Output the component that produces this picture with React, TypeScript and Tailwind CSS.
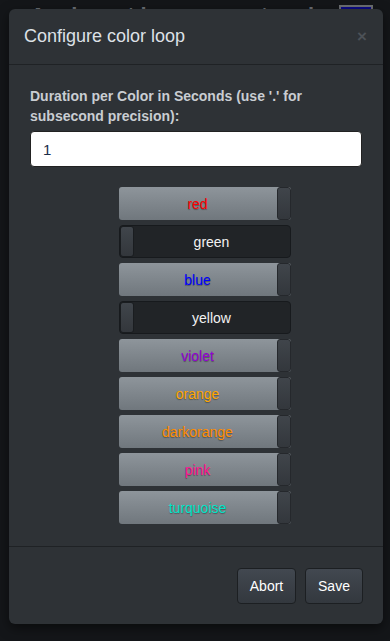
import React from "react";

type Item = { name: string; color: string; on: boolean };

const items: Item[] = [
  { name: "red", color: "#ff0000", on: true },
  { name: "green", color: "#008000", on: false },
  { name: "blue", color: "#0000ff", on: true },
  { name: "yellow", color: "#ffff00", on: false },
  { name: "violet", color: "#9400d3", on: true },
  { name: "orange", color: "#ffa500", on: true },
  { name: "darkorange", color: "#ff8c00", on: true },
  { name: "pink", color: "#ff1493", on: true },
  { name: "turquoise", color: "#00e5c8", on: true },
];

const ColorSwitch = ({ item }: { item: Item }) => {
  if (item.on) {
    return (
      <div className="flex h-[33px] w-[172px] rounded-[3px] bg-gradient-to-b from-[#8e959b] to-[#70777d]">
        <div
          className="flex flex-1 items-center justify-center pt-[2px] text-[14px] [text-shadow:0_1px_1px_rgba(0,0,0,0.35)]"
          style={{ color: item.color }}
        >
          {item.name}
        </div>
        <div className="w-[14px] rounded-[3px] border border-[#25282c] bg-gradient-to-b from-[#40454b] to-[#33373c]" />
      </div>
    );
  }
  return (
    <div className="flex h-[33px] w-[172px] rounded-[4px] border border-[#171a1d] bg-[#212427]">
      <div className="w-[14px] rounded-[3px] border border-[#1a1d20] bg-gradient-to-b from-[#40454b] to-[#33373c]" />
      <div className="flex flex-1 items-center justify-center pt-[2px] text-[14px] text-[#f2f2f2]">
        {item.name}
      </div>
    </div>
  );
};

export default function App() {
  return (
    <div className="relative h-[641px] w-[390px] overflow-hidden bg-[#141619] font-['Liberation_Sans',Arial,sans-serif]">
      {/* page behind the overlay */}
      <div className="flex items-start justify-between px-[30px] pt-[5px]">
        <div className="text-[22px] font-bold leading-none tracking-[6px] text-[#6b6f75]">
          Animation control
        </div>
        <div className="mr-[-13px] h-[20px] w-[34px] border-2 border-[#6c6f73] bg-[#0b0a86]" />
      </div>

      {/* modal */}
      <div className="absolute left-[9px] top-[9px] flex h-[615px] w-[374px] flex-col rounded-[6px] bg-[#2e3236] shadow-[0_4px_12px_rgba(0,0,0,0.5)]">
        <div className="flex h-[56px] items-center justify-between border-b border-[#1f2225] pl-[15px] pr-[16px]">
          <div className="text-[18px] text-[#dde1e6]">Configure color loop</div>
          <div className="text-[17px] font-bold leading-none text-[#4c5157]">×</div>
        </div>

        <div className="flex flex-1 flex-col border-b border-[#1f2225] px-[21px] pt-[21px]">
          <label className="text-[14px] font-bold leading-[20px] text-[#c9cdd2]">
            Duration per Color in Seconds (use '.' for subsecond precision):
          </label>
          <input
            readOnly
            value="1"
            className="mt-[5px] h-[36px] w-full rounded-[4px] border border-[#222] bg-white px-[12px] text-[15px] text-[#1c2e4a] outline-none"
          />
          <div className="mt-[20px] flex flex-col items-center gap-[5px] pl-[17px]">
            {items.map((it) => (
              <ColorSwitch key={it.name} item={it} />
            ))}
          </div>
        </div>

        <div className="flex h-[77px] items-start justify-end gap-[9px] pr-[20px] pt-[21px]">
          <button className="h-[36px] w-[59px] rounded-[4px] border border-[#1c1f22] bg-gradient-to-b from-[#424850] to-[#33383e] text-[14px] text-white">
            Abort
          </button>
          <button className="h-[36px] w-[58px] rounded-[4px] border border-[#1c1f22] bg-gradient-to-b from-[#424850] to-[#33383e] text-[14px] text-white">
            Save
          </button>
        </div>
      </div>
    </div>
  );
}
